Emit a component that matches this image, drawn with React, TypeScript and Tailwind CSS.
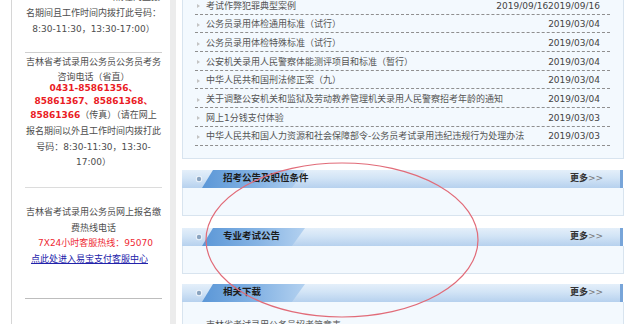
import React from "react";

const rows = [
  { title: "考试作弊犯罪典型案例", date: "2019/09/162019/09/16" },
  { title: "公务员录用体检通用标准（试行）", date: "2019/03/04" },
  { title: "公务员录用体检特殊标准（试行）", date: "2019/03/04" },
  { title: "公安机关录用人民警察体能测评项目和标准（暂行）", date: "2019/03/04" },
  { title: "中华人民共和国刑法修正案（九）", date: "2019/03/04" },
  {
    title: "关于调整公安机关和监狱及劳动教养管理机关录用人民警察招考年龄的通知",
    date: "2019/03/04",
  },
  { title: "网上1分钱支付体验", date: "2019/03/03" },
  {
    title: "中华人民共和国人力资源和社会保障部令-公务员考试录用违纪违规行为处理办法",
    date: "2019/03/03",
  },
];

function Bullet() {
  return (
    <span className="mr-[6px] h-0 w-0 shrink-0 border-y-[2.5px] border-l-[3px] border-y-transparent border-l-[#c4c4c4]" />
  );
}

function NewsRow({ title, date }: { title: string; date: string }) {
  return (
    <div className="flex h-[18.7px] items-center border-b border-dashed border-[#8f8f8f] pl-[2px] pr-[10px] pt-[3px]">
      <Bullet />
      <span className="flex-1 truncate text-[#555]">{title}</span>
      <span className="shrink-0 text-[#444]">{date}</span>
    </div>
  );
}

function SectionHead({ title }: { title: string }) {
  return (
    <div className="relative mr-[1px] flex h-[18px] items-center border-r-[3px] border-r-[#78a5d9] bg-[linear-gradient(to_bottom,#e4effa_0%,#d2e4f6_45%,#b6d1ee_100%)]">
      <svg className="absolute left-0 top-0" width="130" height="18" viewBox="0 0 130 18">
        <defs>
          <linearGradient id="slant" x1="0" y1="0" x2="1" y2="0">
            <stop offset="0" stopColor="#5b97d7" />
            <stop offset="0.55" stopColor="#86b4e4" />
            <stop offset="1" stopColor="#b3d1f0" />
          </linearGradient>
        </defs>
        <polygon points="20,18 31,0 123,0 110,18" fill="url(#slant)" />
        <circle cx="17" cy="9" r="3.2" fill="#edf3fa" />
        <circle cx="17" cy="9" r="2.2" fill="#8aa4c0" />
      </svg>
      <span className="relative ml-[41px] text-[9.5px] font-bold text-[#1c1c1c]">{title}</span>
      <span className="relative ml-auto mr-[17px] text-[9px]">
        <span className="font-bold text-[#333]">更多</span>
        <span className="text-[#777]">&gt;&gt;</span>
      </span>
    </div>
  );
}

export default function App() {
  return (
    <div className="relative h-[324px] w-[640px] overflow-hidden bg-white font-['DejaVu_Sans','Noto_Sans_CJK_SC',sans-serif] text-[9px]">
      <div className="flex">
        <aside className="w-[176px] shrink-0 pl-[11px]">
          <div className="-mt-[11px] h-[345px] border-l border-r-[6px] border-l-[#d6d6d6] border-r-[#ececec] pl-[13px] pr-[8px] text-center text-[#4d4d4d]">
            <div className="h-[16px] pr-[2px] text-right leading-[16px]">（请在网上报</div>
            <div className="h-[16px] leading-[16px]">名期间且工作时间内拨打此号码：</div>
            <div className="h-[16px] leading-[16px]">8:30-11:30，13:30-17:00）</div>
            <div className="mt-[15px] border-t border-[#cfcfcf]" />
            <div className="h-[18px] leading-[18px]">吉林省考试录用公务员公务员考务</div>
            <div className="h-[12px] leading-[12px]">咨询电话（省直）</div>
            <div className="h-[10px] font-bold leading-[10px] text-[#ea1b24]">0431-85861356、</div>
            <div className="h-[16px] font-bold leading-[16px] text-[#ea1b24]">85861367、85861368、</div>
            <div className="h-[12px] leading-[12px]">
              <span className="font-bold text-[#ea1b24]">85861366</span>（传真）（请在网上
            </div>
            <div className="h-[20px] leading-[20px]">报名期间以外且工作时间内拨打此</div>
            <div className="h-[12px] leading-[12px]">号码：8:30-11:30，13:30-</div>
            <div className="h-[18px] leading-[18px]">17:00）</div>
            <div className="mt-[16px] border-t border-[#dcdcdc]" />
            <div className="mt-[16px] h-[16px] leading-[16px]">吉林省考试录用公务员网上报名缴</div>
            <div className="h-[16px] leading-[16px]">费热线电话</div>
            <div className="h-[14px] pl-[4px] leading-[14px] text-[#ee2a33]">7X24小时客服热线：95070</div>
            <div className="h-[18px] pr-[8px] leading-[18px]">
              <span className="text-[#2222aa] underline">点此处进入易宝支付客服中心</span>
            </div>
            <div className="mt-[30px] border-t border-[#bdbdbd]" />
          </div>
        </aside>

        <main className="ml-[6px] w-[442px] shrink-0">
          <div className="-mt-[5px] border border-[#d8e4ef] bg-[#f3f9fe] pb-[12.5px]">
            <div className="ml-[12px] mr-[13px]">
              {rows.map((r, i) => (
                <NewsRow key={i} title={r.title} date={r.date} />
              ))}
            </div>
          </div>

          <div className="mt-[10.5px]">
            <SectionHead title="招考公告及职位条件" />
            <div className="h-[28px] border-x border-b border-[#d8e4ef] bg-[#f3f9fe]" />
          </div>

          <div className="mt-[12px]">
            <SectionHead title="专业考试公告" />
            <div className="h-[28px] border-x border-b border-[#d8e4ef] bg-[#f3f9fe]" />
          </div>

          <div className="mt-[10px]">
            <SectionHead title="相关下载" />
            <div className="h-[40px] border-x border-[#d8e4ef] bg-[#f3f9fe] pt-[17px]">
              <div className="ml-[12px] mr-[13px] flex h-[14px] items-center pl-[2px]">
                <Bullet />
                <span className="text-[#555]">吉林省考试录用公务员招考简章表</span>
              </div>
            </div>
          </div>
        </main>
      </div>

      <svg
        className="pointer-events-none absolute left-0 top-0"
        width="640"
        height="324"
        viewBox="0 0 640 324"
      >
        <ellipse cx="342" cy="240" rx="136" ry="77" fill="none" stroke="#e16b78" strokeWidth="1.2" />
      </svg>
    </div>
  );
}
